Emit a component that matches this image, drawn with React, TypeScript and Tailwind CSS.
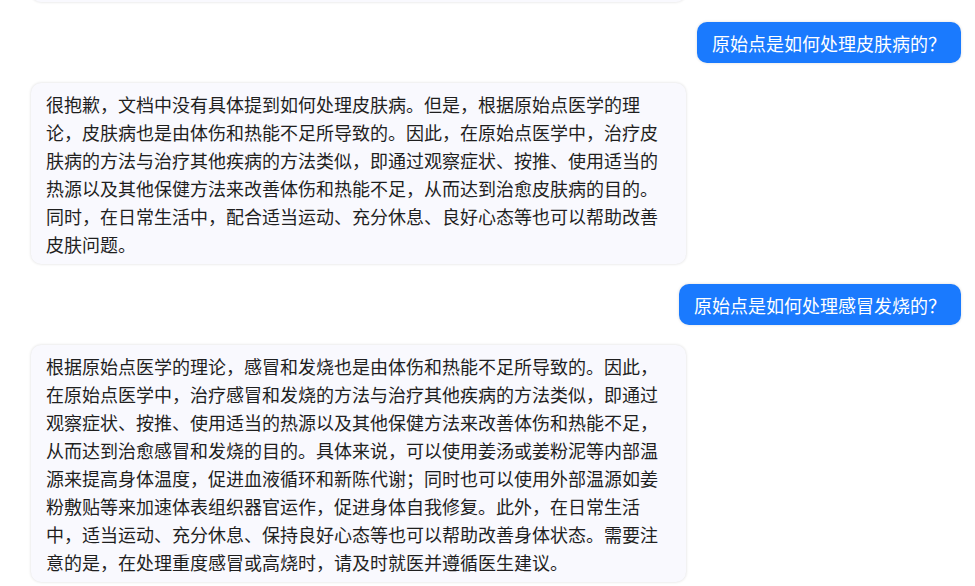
const messages: { role: "user" | "assistant"; text: string }[] = [
  {
    role: "user",
    text: "原始点是如何处理皮肤病的？",
  },
  {
    role: "assistant",
    text: "很抱歉，文档中没有具体提到如何处理皮肤病。但是，根据原始点医学的理论，皮肤病也是由体伤和热能不足所导致的。因此，在原始点医学中，治疗皮肤病的方法与治疗其他疾病的方法类似，即通过观察症状、按推、使用适当的热源以及其他保健方法来改善体伤和热能不足，从而达到治愈皮肤病的目的。同时，在日常生活中，配合适当运动、充分休息、良好心态等也可以帮助改善皮肤问题。",
  },
  {
    role: "user",
    text: "原始点是如何处理感冒发烧的？",
  },
  {
    role: "assistant",
    text: "根据原始点医学的理论，感冒和发烧也是由体伤和热能不足所导致的。因此，在原始点医学中，治疗感冒和发烧的方法与治疗其他疾病的方法类似，即通过观察症状、按推、使用适当的热源以及其他保健方法来改善体伤和热能不足，从而达到治愈感冒和发烧的目的。具体来说，可以使用姜汤或姜粉泥等内部温源来提高身体温度，促进血液循环和新陈代谢；同时也可以使用外部温源如姜粉敷贴等来加速体表组织器官运作，促进身体自我修复。此外，在日常生活中，适当运动、充分休息、保持良好心态等也可以帮助改善身体状态。需要注意的是，在处理重度感冒或高烧时，请及时就医并遵循医生建议。",
  },
];

function UserBubble({ text }: { text: string }) {
  return (
    <div className="self-end rounded-[10px] bg-[#1a7afe] px-[15px] py-[6.5px] text-white shadow-[0_0_3px_rgba(0,0,0,0.15)]">
      {text}
    </div>
  );
}

function AssistantBubble({ text }: { text: string }) {
  return (
    <div className="self-start max-w-[655px] rounded-[10px] bg-[#f9f9fe] px-[15px] py-[6.5px] text-[#1f1f1f] shadow-[0_0_3px_rgba(0,0,0,0.15)]">
      {text}
    </div>
  );
}

export default function App() {
  return (
    <div
      className="h-[586px] w-full overflow-hidden bg-white flex flex-col justify-end gap-5 pl-[31px] pr-[14px] pb-[4px] text-[18px] leading-[28px]"
      style={{ fontFamily: '"Noto Sans CJK SC", "Noto Sans", sans-serif' }}
    >
      {/* earlier answer, scrolled out of view: only its bottom edge shows */}
      <div
        aria-hidden
        className="self-start shrink-0 h-[24px] w-[655px] rounded-[10px] bg-[#f9f9fe] shadow-[0_0_3px_rgba(0,0,0,0.15)]"
      />
      {messages.map((m, i) =>
        m.role === "user" ? (
          <UserBubble key={i} text={m.text} />
        ) : (
          <AssistantBubble key={i} text={m.text} />
        )
      )}
    </div>
  );
}
